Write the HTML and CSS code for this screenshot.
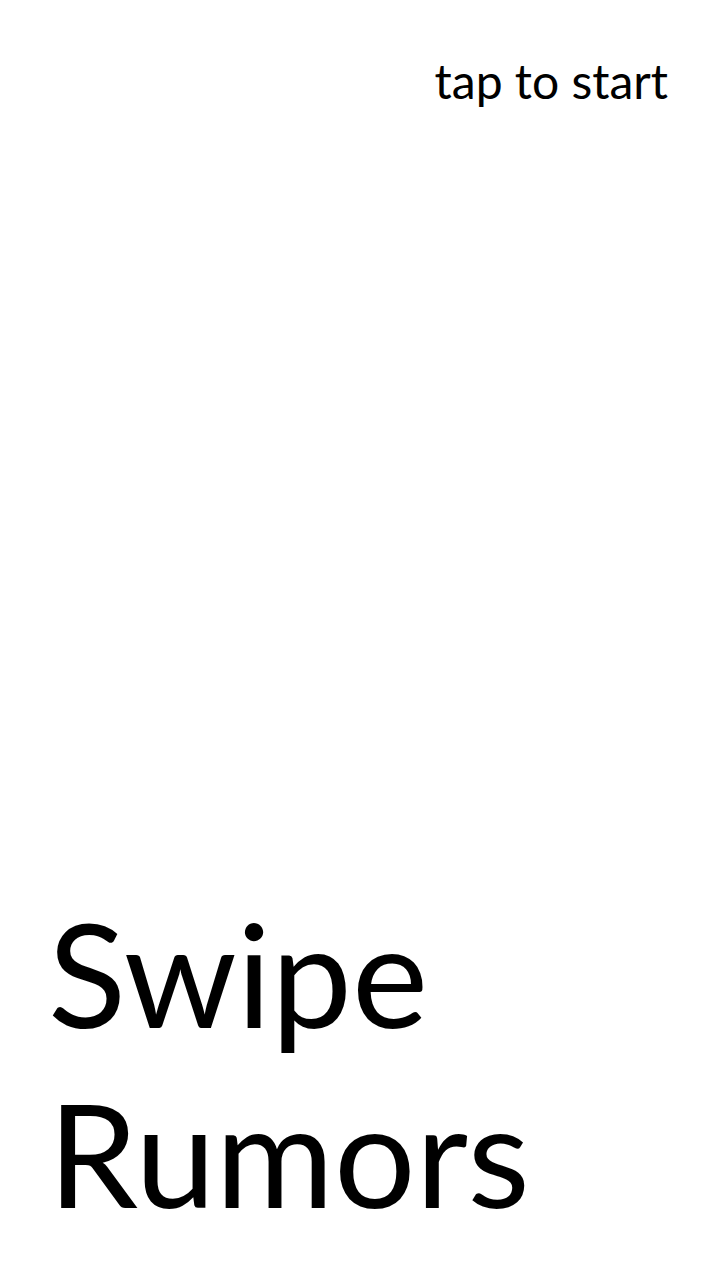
FILE: index.html
```html
<!DOCTYPE html>
<html lang="en">
<head>
<meta charset="utf-8">
<title>Swipe Rumors</title>
<link rel="stylesheet" href="styles.css">
</head>
<body>
<main class="screen">
  <div class="top">
    <span class="hint">tap to start</span>
  </div>
  <h1 class="title">Swipe<br>Rumors</h1>
</main>
</body>
</html>
```

FILE: styles.css
```css
html, body {
  margin: 0;
  padding: 0;
  background: #ffffff;
}
body {
  font-family: Lato, "Open Sans", sans-serif;
  color: #000000;
}
.screen {
  width: 720px;
  height: 1280px;
  display: flex;
  flex-direction: column;
  justify-content: space-between;
  box-sizing: border-box;
  padding: 52px 52px 37px 48px;
}
.top {
  display: flex;
  justify-content: flex-end;
}
.hint {
  font-size: 48px;
  line-height: 58px;
  font-weight: 400;
}
.title {
  margin: 0;
  font-size: 144px;
  line-height: 180px;
  font-weight: 400;
}
```
